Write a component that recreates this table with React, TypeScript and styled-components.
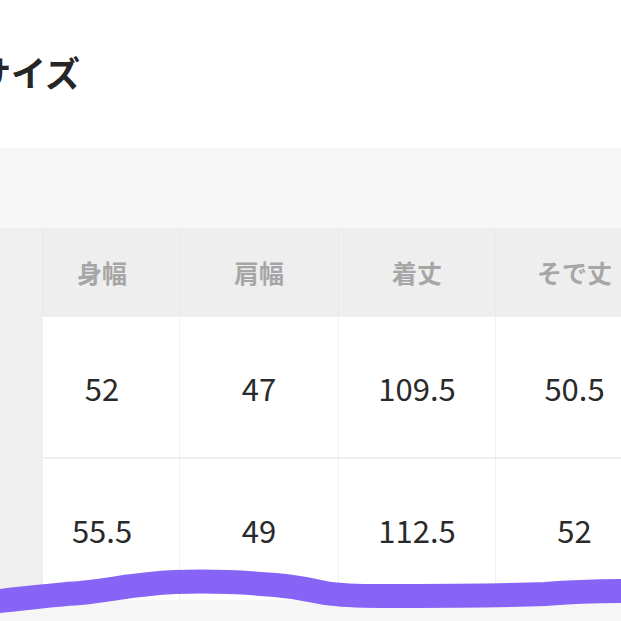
import React from 'react';
import styled, { createGlobalStyle } from 'styled-components';

const GlobalStyle = createGlobalStyle`
  html, body {
    margin: 0;
    padding: 0;
    background: #ffffff;
    font-family: "Noto Sans CJK JP", "Noto Sans", sans-serif;
  }
`;

const Page = styled.div`
  position: relative;
  width: 621px;
  height: 621px;
  overflow: hidden;
  background: #f6f6f6;
`;

const Top = styled.div`
  background: #ffffff;
  padding-top: 51px;
  height: 148px;
  box-sizing: border-box;
`;

const Title = styled.h2`
  margin: 0 0 0 -24px;
  font-size: 35px;
  line-height: 42px;
  font-weight: 700;
  color: #262626;
  white-space: nowrap;
`;

const Band = styled.div`
  height: 80px;
  background: #f7f7f7;
`;

const Grid = styled.div`
  display: grid;
  grid-template-columns: 42px 137px 159px 157px 158px;
  grid-template-rows: 88px 142px 142px;
`;

const SideCell = styled.div`
  background: #efefef;
`;

const HeadCell = styled.div<{ $first?: boolean }>`
  display: flex;
  align-items: center;
  justify-content: center;
  padding-right: ${(p) => (p.$first ? '18px' : '0')};
  background: #eeeeee;
  border-left: 1px solid #e9e9e9;
  font-size: 25px;
  font-weight: 700;
  color: #a6a6a6;
`;

const ValueCell = styled.div<{ $first?: boolean; $last?: boolean }>`
  display: flex;
  align-items: center;
  justify-content: center;
  padding-right: ${(p) => (p.$first ? '18px' : '0')};
  background: #ffffff;
  border-left: 1px solid #f0f0f0;
  border-top: 1px solid #f0f0f0;
  border-bottom: ${(p) => (p.$last ? 'none' : '1px solid #eeeeee')};
  font-size: 31px;
  font-weight: 400;
  color: #2a2a2a;
`;

const Scribble = styled.svg`
  position: absolute;
  left: 0;
  top: 560px;
  width: 621px;
  height: 61px;
  pointer-events: none;
`;

const headers = ['身幅', '肩幅', '着丈', 'そで丈'];
const rows = [
  ['52', '47', '109.5', '50.5'],
  ['55.5', '49', '112.5', '52'],
];

export default function App() {
  return (
    <Page>
      <GlobalStyle />
      <Top>
        <Title>サイズ</Title>
      </Top>
      <Band />
      <Grid>
        <SideCell />
        {headers.map((h, j) => (
          <HeadCell key={h} $first={j === 0}>
            {h}
          </HeadCell>
        ))}
        {rows.map((row, i) => (
          <React.Fragment key={i}>
            <SideCell />
            {row.map((v, j) => (
              <ValueCell key={j} $first={j === 0} $last={i === rows.length - 1}>
                {v}
              </ValueCell>
            ))}
          </React.Fragment>
        ))}
      </Grid>
      <Scribble viewBox="0 0 621 61">
        <path
          d="M -10 42 C 20 39, 50 35, 80 33 C 110 30, 125 26, 150 24 C 190 20, 240 22, 275 25 C 300 27, 310 30, 325 33 C 345 36, 360 36, 380 36 C 440 36, 500 36, 545 34 C 570 32, 600 31, 630 31"
          fill="none"
          stroke="#8763f6"
          strokeWidth="24"
          strokeLinecap="round"
          strokeLinejoin="round"
        />
      </Scribble>
    </Page>
  );
}
